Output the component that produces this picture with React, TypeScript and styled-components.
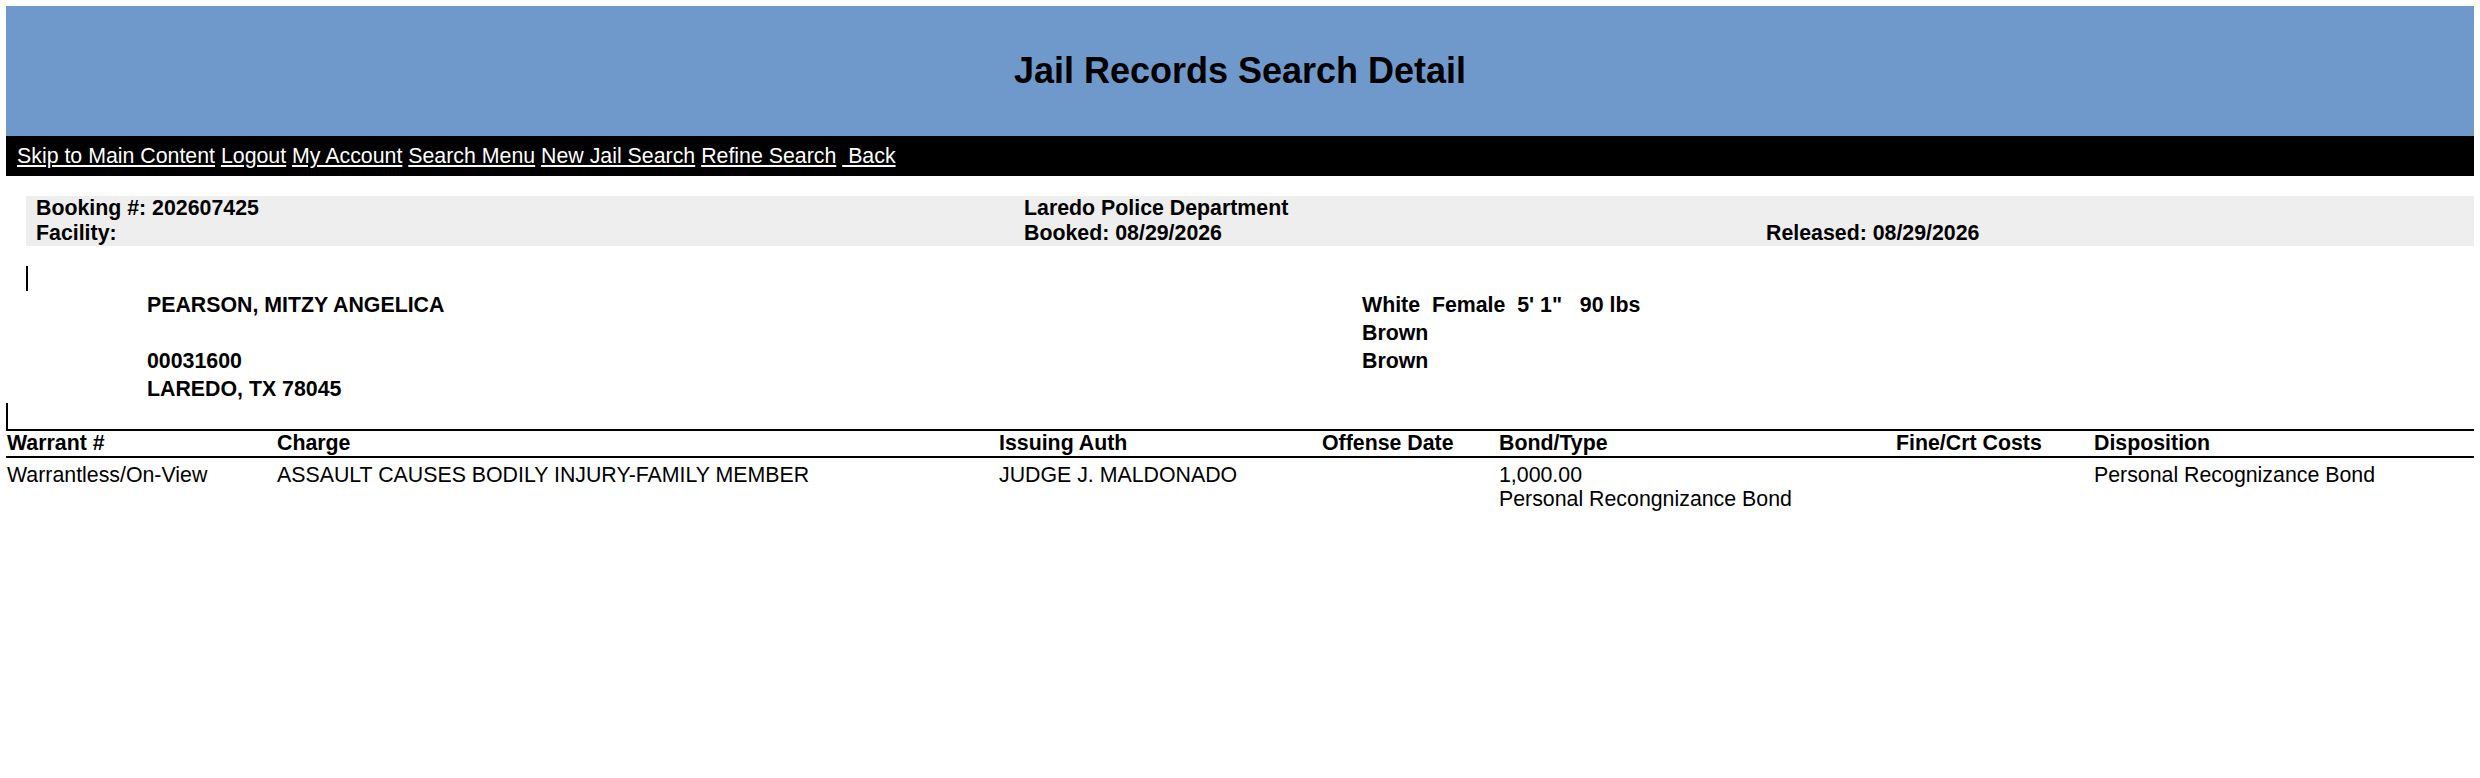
import styled, { createGlobalStyle } from 'styled-components';

const GlobalStyle = createGlobalStyle`
    html {
        overflow-x: hidden;
    }
    body {
        margin: 6px;
        font-family: "Liberation Sans", Arial, sans-serif;
        font-size: 21.33px;
        color: #000;
        background: #fff;
    }
`

const Banner = styled.header`
    background: #6f99cb;
    height: 130px;
    display: flex;
    align-items: center;
    justify-content: center;

    h1 {
        margin: 0;
        font-size: 36px;
        font-weight: bold;
    }
`

const NavBar = styled.nav`
    background: #000;
    height: 40px;
    line-height: 40px;
    padding-left: 11px;
    color: #fff;
    white-space: pre;

    a {
        color: #fff;
        text-decoration: underline;
    }
`

const Summary = styled.section`
    margin: 20px -20px 0 20px;
    background: #eeeeee;
    padding-left: 10px;
    display: grid;
    grid-template-columns: 988px 742px 1fr;
    line-height: 25px;
    font-weight: bold;
`

const Marker = styled.div<{ $left: number; $height: number }>`
    width: 2px;
    height: ${p => p.$height}px;
    background: #000;
    margin-left: ${p => p.$left}px;
`

const Person = styled.section`
    margin-top: 20px;
`

const PersonGrid = styled.div`
    display: grid;
    grid-template-columns: 1215px 1fr;
    padding-left: 141px;
    line-height: 28px;
    font-weight: bold;
    white-space: pre;
`

const Charges = styled.div`
    display: grid;
    grid-template-columns: 271px 722px 323px 177px 397px 198px 1fr;
`

const HeadCell = styled.div<{ $first?: boolean }>`
    font-weight: bold;
    line-height: 24px;
    padding-bottom: 1px;
    border-top: 2px solid #000;
    border-bottom: 2px solid #000;
    padding-left: ${p => (p.$first ? '1px' : '0')};
`

const Cell = styled.div<{ $first?: boolean }>`
    line-height: 24px;
    padding-top: 5px;
    padding-left: ${p => (p.$first ? '1px' : '0')};
`

const headers = ['Warrant #', 'Charge', 'Issuing Auth', 'Offense Date', 'Bond/Type', 'Fine/Crt Costs', 'Disposition'];

export default function App() {
    return (
        <>
            <GlobalStyle />
            <Banner>
                <h1>Jail Records Search Detail</h1>
            </Banner>
            <NavBar>
                <a href="#main">Skip to Main Content</a>{' '}
                <a href="#">Logout</a>{' '}
                <a href="#">My Account</a>{' '}
                <a href="#">Search Menu</a>{' '}
                <a href="#">New Jail Search</a>{' '}
                <a href="#">Refine Search</a>{' '}
                <a href="#">{'\u00a0Back'}</a>
            </NavBar>
            <Summary>
                <div>Booking #: 202607425</div>
                <div>Laredo Police Department</div>
                <div></div>
                <div>Facility:</div>
                <div>Booked: 08/29/2026</div>
                <div>Released: 08/29/2026</div>
            </Summary>
            <Person id="main">
                <Marker $left={20} $height={25} />
                <PersonGrid>
                    <div>PEARSON, MITZY ANGELICA</div>
                    <div>{'White  Female  5\' 1"   90 lbs'}</div>
                    <div>{'\u00a0'}</div>
                    <div>Brown</div>
                    <div>00031600</div>
                    <div>Brown</div>
                    <div>LAREDO, TX 78045</div>
                    <div></div>
                </PersonGrid>
            </Person>
            <Marker $left={0} $height={26} />
            <Charges>
                {headers.map((h, i) => (
                    <HeadCell key={h} $first={i === 0}>{h}</HeadCell>
                ))}
                <Cell $first>Warrantless/On-View</Cell>
                <Cell>ASSAULT CAUSES BODILY INJURY-FAMILY MEMBER</Cell>
                <Cell>JUDGE J. MALDONADO</Cell>
                <Cell></Cell>
                <Cell>
                    1,000.00
                    <br />
                    Personal Recongnizance Bond
                </Cell>
                <Cell></Cell>
                <Cell>Personal Recognizance Bond</Cell>
            </Charges>
        </>
    );
}
